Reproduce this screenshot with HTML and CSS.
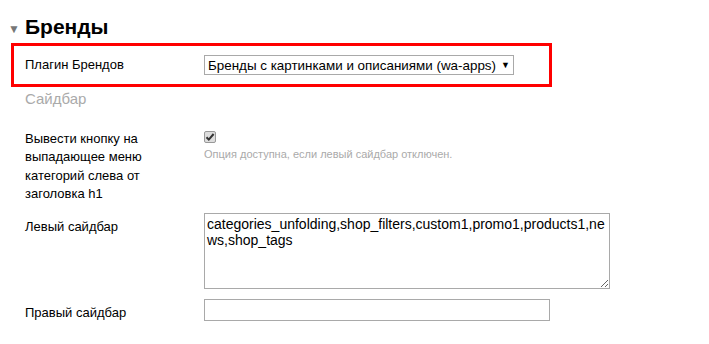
FILE: index.html
```html
<!DOCTYPE html>
<html lang="ru">
<head>
  <meta charset="UTF-8">
  <title>Бренды</title>
  <link rel="stylesheet" href="styles.css">
</head>
<body>
  <div class="settings">
    <h2 class="block-title"><span class="toggle">▼</span>Бренды</h2>

    <div class="field highlight">
      <div class="name">Плагин Брендов</div>
      <div class="value">
        <div class="select-wrap">
          <select class="select">
            <option>Бренды с картинками и описаниями (wa-apps)</option>
          </select>
          <span class="select-arrow">▼</span>
        </div>
      </div>
    </div>

    <h3 class="subtitle">Сайдбар</h3>

    <div class="field field-check">
      <div class="name">Вывести кнопку на выпадающее меню категорий слева от заголовка h1</div>
      <div class="value">
        <span class="checkbox">
          <svg width="10" height="10" viewBox="0 0 10 10"><path d="M1.5 5.2 L3.8 7.6 L8.6 2" fill="none" stroke="#333" stroke-width="2"/></svg>
        </span>
        <div class="hint">Опция доступна, если левый сайдбар отключен.</div>
      </div>
    </div>

    <div class="field field-area">
      <div class="name">Левый сайдбар</div>
      <div class="value">
        <textarea class="textarea">categories_unfolding,shop_filters,custom1,promo1,products1,news,shop_tags</textarea>
      </div>
    </div>

    <div class="field field-input">
      <div class="name">Правый сайдбар</div>
      <div class="value">
        <input class="input" type="text">
      </div>
    </div>
  </div>
</body>
</html>
```

FILE: styles.css
```css
body {
  margin: 0;
  background: #fff;
  color: #000;
  font-family: "Liberation Sans", Arial, sans-serif;
  font-size: 13px;
}

.settings {
  padding: 13px 0 0 8px;
  width: 620px;
}

.block-title {
  display: flex;
  align-items: center;
  margin: 0;
  font-size: 21px;
  font-weight: bold;
  line-height: 24px;
}

.toggle {
  color: #777;
  font-size: 12px;
  width: 17px;
  padding-top: 4px;
}

.field {
  display: flex;
  align-items: flex-start;
}

.name {
  flex: 0 0 150px;
  padding-right: 29px;
  line-height: 18px;
}

.value {
  flex: 1;
}

.highlight {
  margin: 2px 0 0 3px;
  width: 524px;
  border: 3px solid #f00;
  padding: 9px 0 9px 11px;
  align-items: center;
}

.select-wrap {
  position: relative;
  width: 310px;
}

.select {
  appearance: none;
  -webkit-appearance: none;
  width: 310px;
  height: 20px;
  margin: 0;
  padding: 0 0 0 3px;
  border: 1px solid #a9a9a9;
  border-radius: 0;
  background: #fff;
  font-family: "Liberation Sans", Arial, sans-serif;
  font-size: 13.4px;
  color: #000;
}

.select-arrow {
  position: absolute;
  right: 4px;
  top: 5px;
  font-size: 9px;
  line-height: 10px;
  pointer-events: none;
}

.subtitle {
  margin: 3px 0 0 17px;
  color: #aaa;
  font-size: 15px;
  font-weight: normal;
  line-height: 18px;
}

.field-check {
  margin: 22px 0 0 17px;
}

.field-check .name {
  line-height: 18.3px;
}

.checkbox {
  display: block;
  width: 10px;
  height: 10px;
  margin-top: 1px;
  border: 1px solid #999;
  border-radius: 2px;
  background: #ddd;
}

.checkbox svg {
  display: block;
}

.hint {
  margin-top: 4px;
  color: #aaa;
  font-size: 11px;
  line-height: 14px;
}

.field-area {
  margin: 10px 0 0 17px;
}

.field-area .name {
  padding-top: 5px;
}

.textarea {
  display: block;
  box-sizing: border-box;
  width: 406px;
  height: 76px;
  margin: 0;
  padding: 2px;
  border: 1px solid #a9a9a9;
  font-family: "Liberation Sans", Arial, sans-serif;
  font-size: 14px;
  line-height: 16px;
  color: #000;
}

.field-input {
  margin: 10px 0 0 17px;
}

.field-input .name {
  padding-top: 5px;
}

.input {
  display: block;
  box-sizing: border-box;
  width: 346px;
  height: 22px;
  margin: 0;
  border: 1px solid #a9a9a9;
  font-family: "Liberation Sans", Arial, sans-serif;
  font-size: 13px;
}
```
